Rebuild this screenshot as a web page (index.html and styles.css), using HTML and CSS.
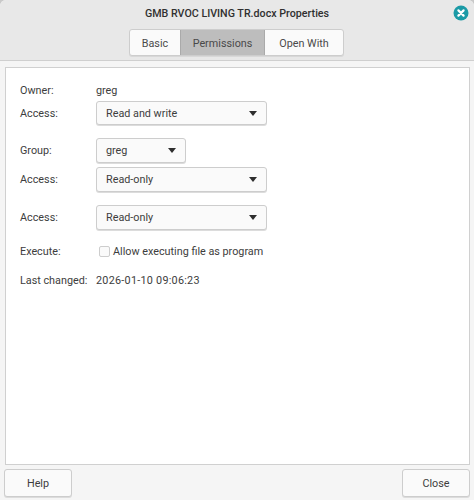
FILE: index.html
```html
<!DOCTYPE html>
<html lang="en">
<head>
<meta charset="utf-8">
<title>Properties</title>
<link rel="stylesheet" href="styles.css">
</head>
<body>
<div class="window">
  <header class="header">
    <div class="titlebar">
      <span class="title">GMB RVOC LIVING TR.docx Properties</span>
      <svg class="close-icon" width="16" height="16" viewBox="0 0 16 16" aria-hidden="true">
        <circle cx="8" cy="8" r="7.5" fill="#1b9aa6"/>
        <path d="M5.4 5.4l5.2 5.2M10.6 5.4l-5.2 5.2" stroke="#fff" stroke-width="2.2" stroke-linecap="round"/>
      </svg>
    </div>
    <nav class="tabs">
      <span class="tab tab-basic">Basic</span>
      <span class="tab tab-perm active">Permissions</span>
      <span class="tab tab-open">Open With</span>
    </nav>
  </header>
  <main class="panel">
    <div class="row row-owner"><span class="label">Owner:</span><span>greg</span></div>
    <div class="row row-a1"><span class="label">Access:</span><div class="select wide"><span>Read and write</span><i class="arrow"></i></div></div>
    <div class="row row-group"><span class="label">Group:</span><div class="select narrow"><span>greg</span><i class="arrow"></i></div></div>
    <div class="row row-a2"><span class="label">Access:</span><div class="select wide"><span>Read-only</span><i class="arrow"></i></div></div>
    <div class="row row-a3"><span class="label">Access:</span><div class="select wide"><span>Read-only</span><i class="arrow"></i></div></div>
    <div class="row row-exec"><span class="label">Execute:</span><label class="check"><i class="box"></i><span>Allow executing file as program</span></label></div>
    <div class="row row-last"><span class="label">Last changed:</span><span class="date">2026-01-10 09:06:23</span></div>
  </main>
  <footer class="footer">
    <span class="btn">Help</span>
    <span class="btn">Close</span>
  </footer>
</div>
</body>
</html>
```
FILE: styles.css
```css
* { box-sizing: border-box; }
html, body { margin: 0; padding: 0; background: #c9c9c9; }
body { width: 474px; height: 500px; overflow: hidden; }
.window {
  width: 474px; height: 500px; display: flex; flex-direction: column;
  background: #f5f5f5; border-radius: 6px 6px 0 0; overflow: hidden;
  font-family: Roboto, "Noto Sans", sans-serif; font-size: 10.8px; color: #3d3d3d;
}
.header { height: 61px; background: #e8e8e8; border-bottom: 1px solid #cfcfcf; flex: none; }
.titlebar { height: 27px; display: flex; align-items: center; justify-content: center; position: relative; }
.title { font-weight: 500; color: #303030; font-size: 10.7px; }
.close-icon { position: absolute; left: 452.5px; top: 5px; }
.tabs { display: flex; width: 215px; height: 27px; margin: 2px 0 0 129px; border: 1px solid #cdcdcd; border-radius: 3px; background: #fafafa; overflow: hidden; box-shadow: 0 1px 0 #d8d8d8; }
.tab { display: flex; align-items: center; justify-content: center; color: #4a4a4a; padding-top: 1px; }
.tab-basic { width: 50px; }
.tab-perm { width: 85px; }
.tab-open { flex: 1; }
.active { background: #bdbdbd; border-left: 1px solid #aaa; border-right: 1px solid #aaa; }
.panel {
  flex: none; width: 465px; height: 398px; margin: 6px 0 0 5px; padding: 12px 14px 0;
  background: #fff; border: 1px solid #d0d0d0;
  display: flex; flex-direction: column;
}
.row { display: flex; align-items: center; }
.label { width: 76px; flex: none; }
.date { letter-spacing: 0.26px; }
.row-owner { height: 20px; }
.row-a1 { margin-top: 1px; height: 24px; }
.row-group { margin-top: 13px; height: 25px; }
.row-a2 { margin-top: 4px; height: 25px; }
.row-a3 { margin-top: 13px; height: 25px; }
.row-exec { margin-top: 11px; height: 20px; }
.row-last { margin-top: 9px; height: 20px; }
.select {
  height: 100%; display: flex; align-items: center; justify-content: space-between;
  padding: 0 9px 0 9px; background: #fafafa; border: 1px solid #cdcdcd; border-radius: 3px;
  box-shadow: 0 1px 0 #dcdcdc;
}
.wide { width: 171px; }
.narrow { width: 90px; }
.arrow { width: 0; height: 0; border-left: 4.5px solid transparent; border-right: 4.5px solid transparent; border-top: 5px solid #2e2e2e; }
.check { display: flex; align-items: center; margin-left: 3px; gap: 3px; }
.box { width: 11px; height: 11px; background: #fafafa; border: 1px solid #cdcdcd; border-radius: 2px; }
.footer { flex: 1; display: flex; justify-content: space-between; padding: 4px 4px 4px; }
.btn {
  width: 68px; height: 28px; display: flex; align-items: center; justify-content: center;
  background: #fafafa; border: 1px solid #cdcdcd; border-radius: 3px; box-shadow: 0 1px 0 #dcdcdc; color: #3d3d3d;
}
```
